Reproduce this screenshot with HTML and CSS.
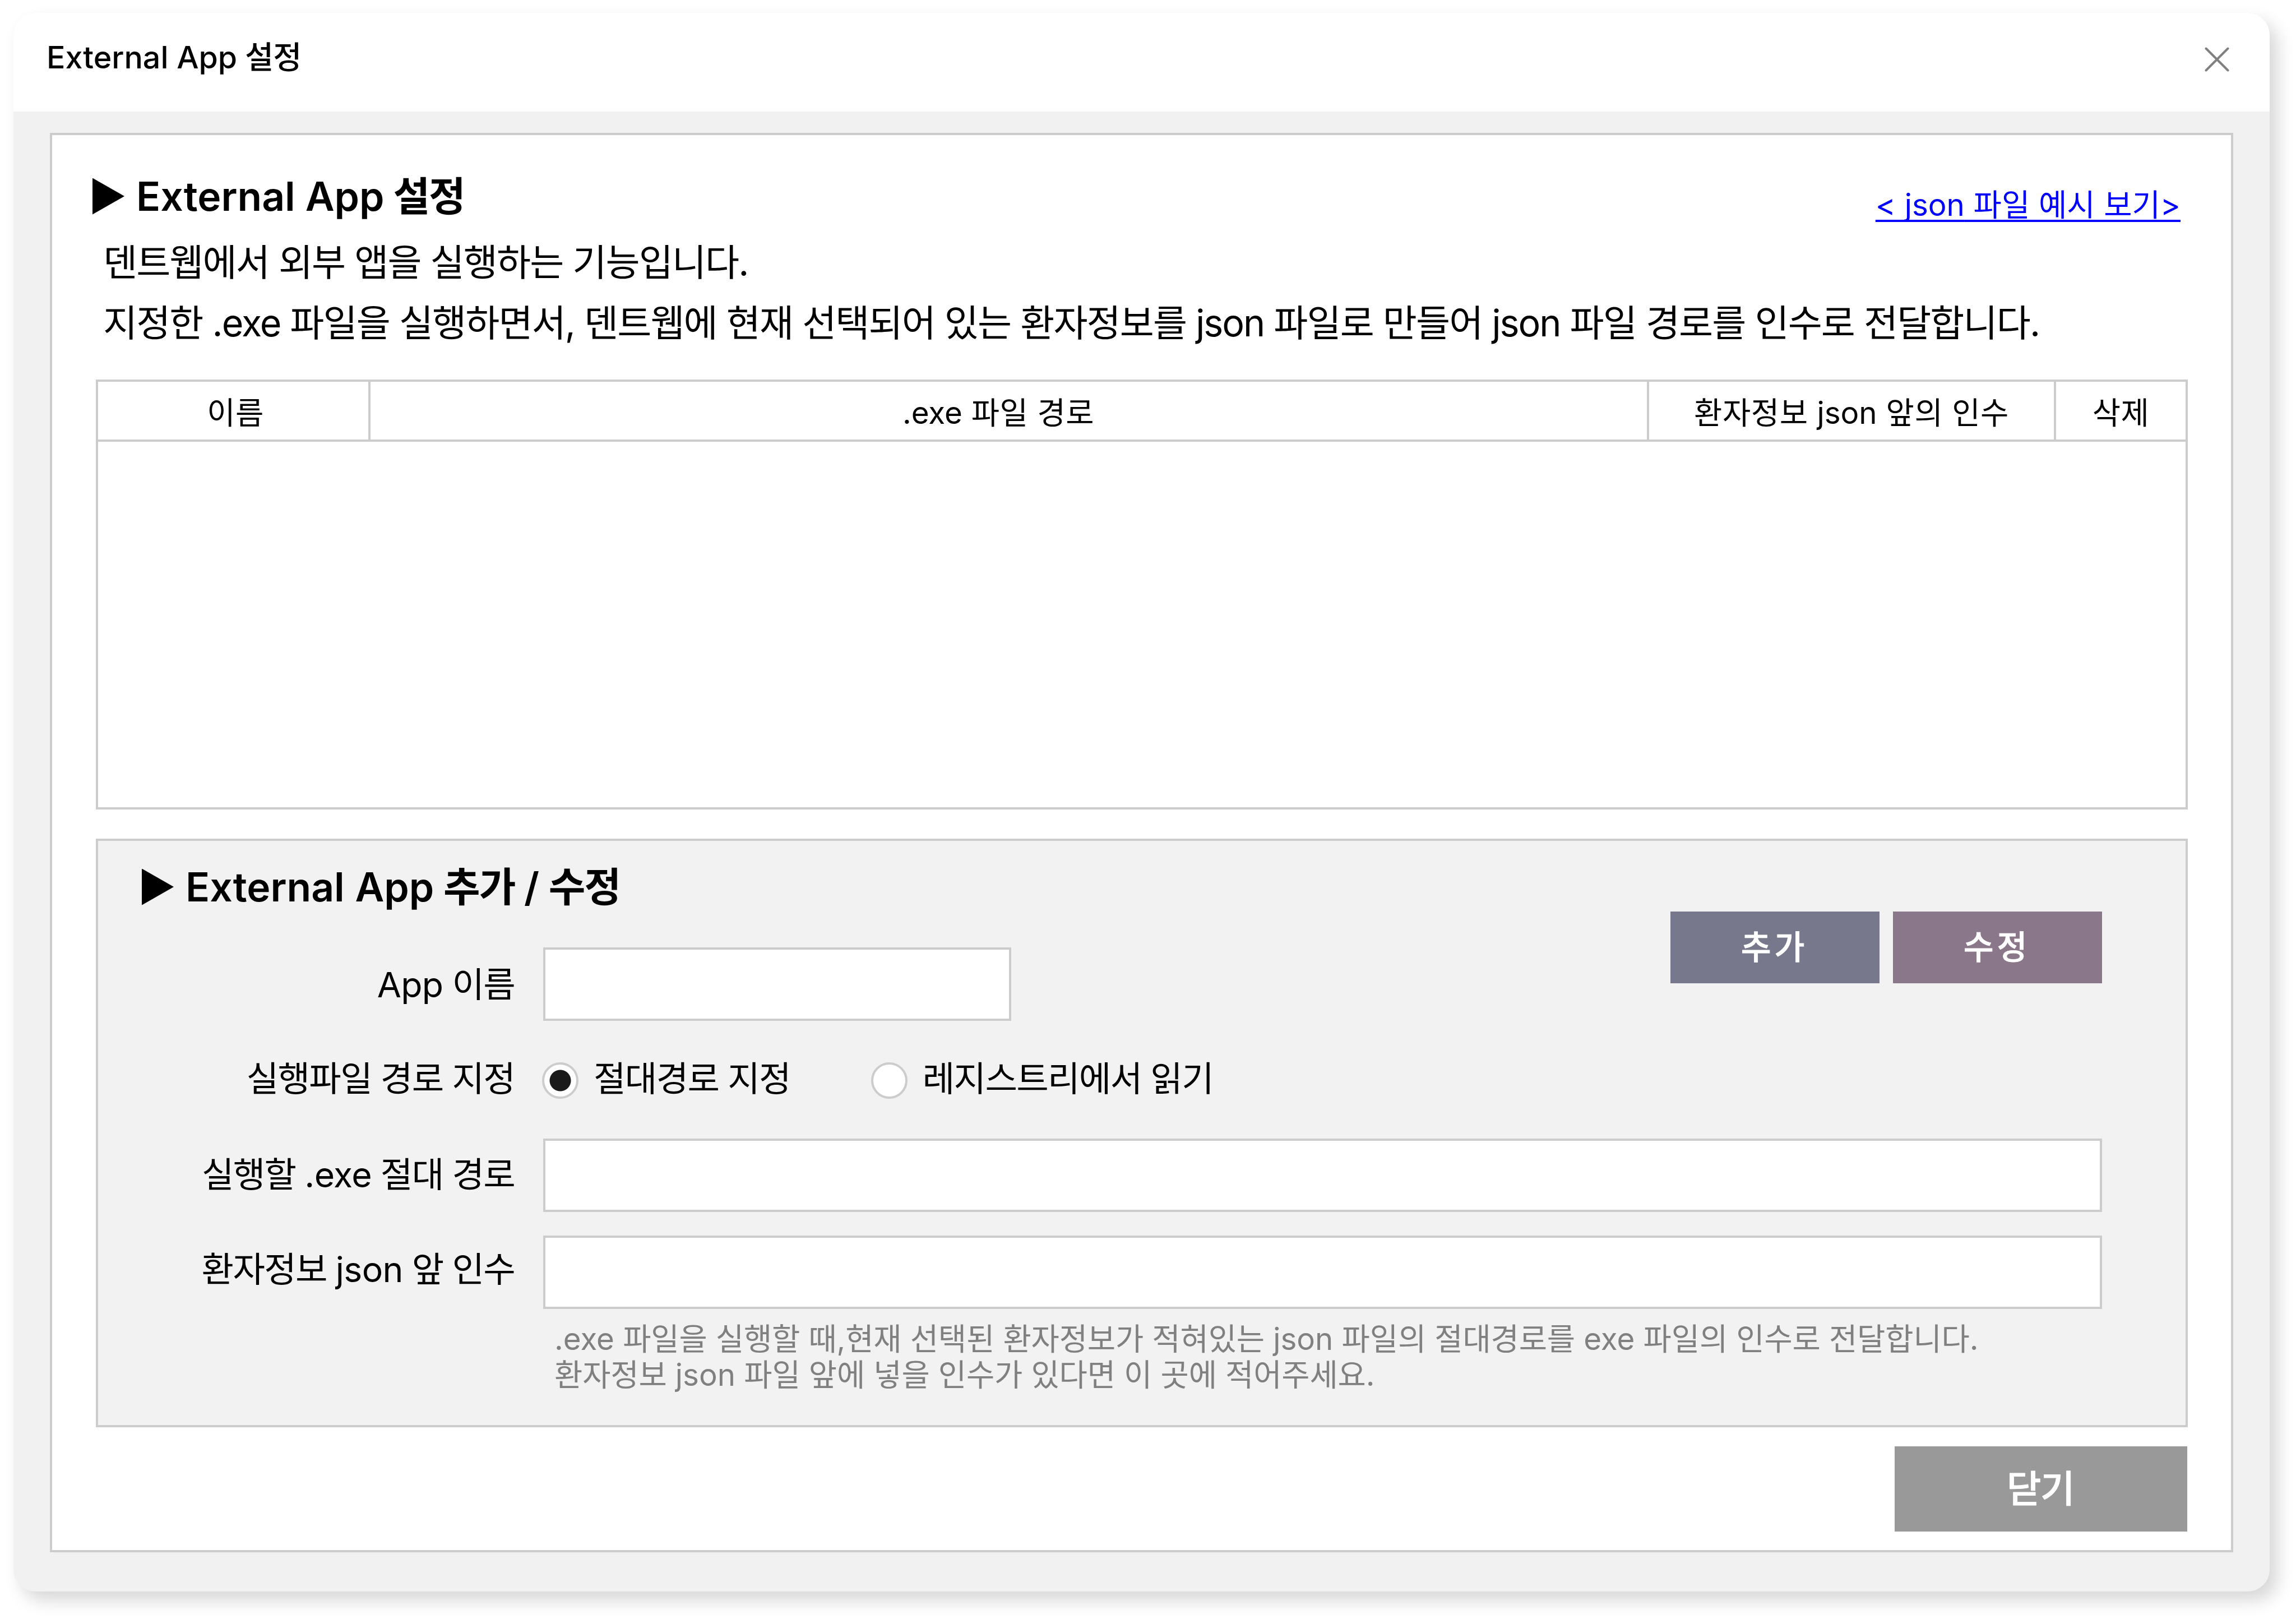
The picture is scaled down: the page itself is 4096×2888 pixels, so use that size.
FILE: index.html
```html
<!DOCTYPE html>
<html lang="ko">
<head>
    <meta charset="UTF-8">
    <title>External App 설정</title>
    <link rel="stylesheet" href="styles.css">
</head>
<body>
    <div class="window">
        <div class="titlebar">
            <span class="title"><span class="en">External App</span> 설정</span>
            <svg class="close-icon" viewBox="0 0 44 44"><path d="M2.5 2.5 L41.5 41.5 M41.5 2.5 L2.5 41.5"/></svg>
        </div>

        <div class="panel">
            <div class="panel-head">
                <h2><span class="arrow"></span><span><span class="en">External App</span> 설정</span></h2>
                <a class="example-link" href="#">&lt; <span class="en">json</span> 파일 예시 보기&gt;</a>
            </div>
            <p class="desc">덴트웹에서 외부 앱을 실행하는 기능입니다.<br>지정한 <span class="en">.exe</span> 파일을 실행하면서, 덴트웹에 현재 선택되어 있는 환자정보를 <span class="en">json</span> 파일로 만들어 <span class="en">json</span> 파일 경로를 인수로 전달합니다.</p>

            <div class="app-list">
                <div class="list-head">
                    <div class="col-name">이름</div>
                    <div class="col-path"><span class="en">.exe</span> 파일 경로</div>
                    <div>환자정보 <span class="en">json</span> 앞의 인수</div>
                    <div>삭제</div>
                </div>
            </div>

            <div class="form">
                <h2><span class="arrow"></span><span><span class="en">External App</span> 추가 <span class="en">/</span> 수정</span></h2>

                <div class="row row-name">
                    <label for="appName"><span class="en">App</span> 이름</label>
                    <input type="text" id="appName" class="short">
                    <div class="buttons">
                        <button class="add">추가</button>
                        <button class="edit">수정</button>
                    </div>
                </div>
                <div class="row row-type">
                    <label>실행파일 경로 지정</label>
                    <label class="radio"><input type="radio" name="pathType" checked><span>절대경로 지정</span></label>
                    <label class="radio"><input type="radio" name="pathType"><span>레지스트리에서 읽기</span></label>
                </div>
                <div class="row row-path">
                    <label for="exePath">실행할 <span class="en">.exe</span> 절대 경로</label>
                    <input type="text" id="exePath">
                </div>
                <div class="row row-args">
                    <label for="args">환자정보 <span class="en">json</span> 앞 인수</label>
                    <input type="text" id="args">
                </div>
                <p class="hint"><span class="en">.exe</span> 파일을 실행할 때,현재 선택된 환자정보가 적혀있는 <span class="en">json</span> 파일의 절대경로를 <span class="en">exe</span> 파일의 인수로 전달합니다.<br>환자정보 <span class="en">json</span> 파일 앞에 넣을 인수가 있다면 이 곳에 적어주세요.</p>
            </div>

            <button class="close">닫기</button>
        </div>
    </div>
</body>
</html>
```
FILE: styles.css
```css
* {
    box-sizing: border-box;
}
body {
    margin: 0;
    padding: 23px 47px 49px 24px;
    height: 2888px;
    background: #fff;
    color: #000;
    font-family: Inter, "Noto Sans CJK KR", sans-serif;
}
h2, p {
    margin: 0;
}
.en {
    letter-spacing: 0;
}
.window {
    height: 2816px;
    border-radius: 39px;
    background: #f1f1f1;
    box-shadow: 14px 16px 31px rgba(0, 0, 0, 0.16);
}
.titlebar {
    display: flex;
    justify-content: space-between;
    height: 176px;
    padding: 46px 72px 0 59px;
    border-radius: 39px 39px 0 0;
    background: #fff;
}
.title {
    font-size: 55.5px;
    font-weight: 500;
    line-height: 66px;
    letter-spacing: -0.015em;
}
.close-icon {
    width: 44px;
    height: 44px;
    margin-top: 15px;
    fill: none;
    stroke: #808080;
    stroke-width: 4;
    stroke-linecap: round;
}

.panel {
    display: flex;
    flex-direction: column;
    height: 2532px;
    margin: 38px 65px 0;
    padding: 66px 77px 0 78px;
    border: 4px solid #ccc;
    background: #fff;
}
.panel-head {
    display: flex;
    justify-content: space-between;
    align-items: center;
    height: 86px;
    margin-left: -6px;
    padding-right: 13px;
}
h2 {
    display: flex;
    align-items: center;
    gap: 21px;
    font-size: 71.3px;
    font-weight: 600;
    line-height: 86px;
    letter-spacing: -0.028em;
}
.arrow {
    width: 57px;
    height: 65px;
    background: #000;
    clip-path: polygon(0 0, 100% 50%, 0 100%);
}
.example-link {
    margin-top: 30px;
    color: #00f;
    font-size: 54.7px;
    line-height: 66px;
    word-spacing: 0.3px;
    text-decoration-thickness: 4px;
    text-underline-offset: 7px;
    text-decoration-skip-ink: none;
}
.desc {
    margin: 21px 0 0 13px;
    font-size: 66.4px;
    line-height: 108px;
    letter-spacing: -0.0285em;
    word-spacing: 0.2px;
    white-space: nowrap;
}
.desc .en {
    letter-spacing: -0.03em;
}

.app-list {
    height: 767px;
    margin-top: 47px;
    border: 4px solid #ccc;
}
.list-head {
    display: grid;
    grid-template-columns: 482px 2281px 726px 1fr;
    height: 107px;
    border-bottom: 4px solid #ccc;
    font-size: 54.7px;
    line-height: 95px;
    letter-spacing: 0.01em;
    text-align: center;
}
.list-head div {
    padding-top: 8px;
}
.list-head div + div {
    border-left: 4px solid #ccc;
}
.list-head .col-name {
    padding-left: 8px;
}
.list-head .col-path {
    padding-right: 37px;
}

.form {
    height: 1050px;
    margin-top: 52px;
    padding: 39px 149px 0 0;
    border: 4px solid #ccc;
    background: #f2f2f2;
}
.form h2 {
    padding-left: 78px;
    word-spacing: 0.8px;
}
.row {
    display: flex;
    align-items: center;
    height: 131px;
    font-size: 62.5px;
    line-height: 76px;
    letter-spacing: -0.027em;
}
.row .en {
    letter-spacing: -0.01em;
}
.row > label:first-child {
    width: 743px;
    margin-right: 51px;
    text-align: right;
}
.row input[type="text"] {
    flex: 1;
    height: 131px;
    border: 4px solid #ccc;
    background: #fff;
}
.row input.short {
    flex: none;
    width: 835px;
}
.row-name {
    align-items: flex-end;
    height: 196px;
}
.row-name > label:first-child {
    padding-bottom: 27px;
}
.buttons {
    display: flex;
    gap: 24px;
    align-self: flex-start;
    margin-left: auto;
}
button {
    padding: 0;
    border: none;
    color: #fff;
    font-family: inherit;
    font-weight: 500;
    line-height: 1.2;
    -webkit-text-stroke: 0.8px #fff;
}
.buttons button {
    width: 373px;
    height: 128px;
    margin-top: 1px;
    padding-right: 2px;
    font-size: 58.6px;
    letter-spacing: 0.1em;
}
.add {
    background: #77788b;
}
.edit {
    background: #8b778a;
}
.row-type {
    margin-top: 41px;
}
.row-type label:first-child {
    padding-bottom: 8px;
}
.radio {
    display: flex;
    align-items: center;
    margin-right: 146px;
}
.radio span {
    padding-bottom: 8px;
}
.radio input {
    appearance: none;
    width: 65px;
    height: 65px;
    margin: 0 27px 0 -2px;
    border: 4px solid #ccc;
    border-radius: 50%;
    background: #fff;
}
.radio input:checked {
    background: radial-gradient(circle, #1a1a1a 18.5px, #fff 19.5px);
}
.row-path {
    margin-top: 38px;
}
.row-path label {
    padding-bottom: 4px;
}
.row-args {
    margin-top: 42px;
}
.row-args label {
    padding-bottom: 11px;
}
.hint {
    margin: 21px 0 0 814px;
    color: #808080;
    font-size: 54.7px;
    line-height: 64px;
    letter-spacing: -0.003em;
    white-space: nowrap;
}

.close {
    align-self: flex-end;
    width: 522px;
    height: 152px;
    margin: 34px 1px 0 0;
    padding-right: 2px;
    background: #999;
    font-size: 67px;
    letter-spacing: -0.02em;
}
```
